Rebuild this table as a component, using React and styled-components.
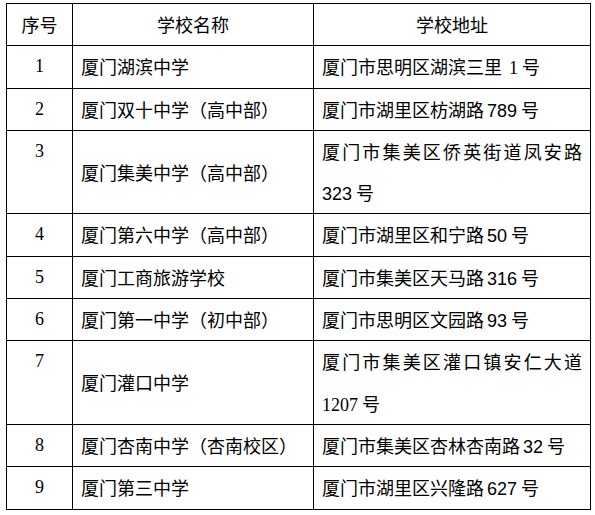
import React from "react";
import styled, { createGlobalStyle } from "styled-components";

const Global = createGlobalStyle`
  html, body { margin: 0; padding: 0; background: #fff; }
  body {
    font-family: "Noto Sans CJK SC", "Liberation Serif", serif;
    color: #000;
  }
`;

const Page = styled.div`
  padding: 3px 0 0 6px;
`;

const Table = styled.table`
  border-collapse: collapse;
  table-layout: fixed;
  width: 585px;
  font-size: 18px;
`;

const HeadCell = styled.th`
  width: ${(p) => p.$w}px;
  border: 1px solid #000;
  font-weight: 400;
  text-align: center;
  line-height: 41.3px;
  padding: 0;
  height: 41.3px;
`;

const NoCell = styled.td`
  border: 1px solid #000;
  text-align: center;
  vertical-align: top;
  line-height: 41.3px;
  height: 41.3px;
  padding: 0;
  font-family: "Liberation Serif", serif;
`;

const NameCell = styled.td`
  border: 1px solid #000;
  vertical-align: middle;
  line-height: 41.3px;
  padding: 0 4px 0 8px;
  white-space: nowrap;
`;

const AddrCell = styled.td`
  border: 1px solid #000;
  vertical-align: top;
  line-height: 41.3px;
  padding: 0 8px 0 8px;
  text-align: justify;
  text-justify: inter-character;
`;

const Num = styled.span`
  line-height: 1;
  margin-left: ${(p) => p.$gap}px;
  font-family: ${(p) =>
    p.$serif ? '"Liberation Serif", serif' : '"Liberation Sans", sans-serif'};
`;

const rows = [
  { no: 1, name: "厦门湖滨中学", addr: "厦门市思明区湖滨三里", num: "1", serif: true, gap: 7 },
  { no: 2, name: "厦门双十中学（高中部）", addr: "厦门市湖里区枋湖路", num: "789" },
  { no: 3, name: "厦门集美中学（高中部）", addr: "厦门市集美区侨英街道凤安路", num: "323", gap: 0 },
  { no: 4, name: "厦门第六中学（高中部）", addr: "厦门市湖里区和宁路", num: "50" },
  { no: 5, name: "厦门工商旅游学校", addr: "厦门市集美区天马路", num: "316" },
  { no: 6, name: "厦门第一中学（初中部）", addr: "厦门市思明区文园路", num: "93" },
  { no: 7, name: "厦门灌口中学", addr: "厦门市集美区灌口镇安仁大道", num: "1207", serif: true, gap: 0 },
  { no: 8, name: "厦门杏南中学（杏南校区）", addr: "厦门市集美区杏林杏南路", num: "32" },
  { no: 9, name: "厦门第三中学", addr: "厦门市湖里区兴隆路", num: "627" },
];

export default function App() {
  return (
    <Page>
      <Global />
      <Table>
        <thead>
          <tr>
            <HeadCell $w={65}>序号</HeadCell>
            <HeadCell $w={240}>学校名称</HeadCell>
            <HeadCell $w={276}>学校地址</HeadCell>
          </tr>
        </thead>
        <tbody>
          {rows.map((r) => (
            <tr key={r.no}>
              <NoCell>{r.no}</NoCell>
              <NameCell>{r.name}</NameCell>
              <AddrCell>
                {r.addr}
                <Num $serif={r.serif} $gap={r.gap ?? 3}>
                  {r.num}
                </Num>{" "}
                号
              </AddrCell>
            </tr>
          ))}
        </tbody>
      </Table>
    </Page>
  );
}
